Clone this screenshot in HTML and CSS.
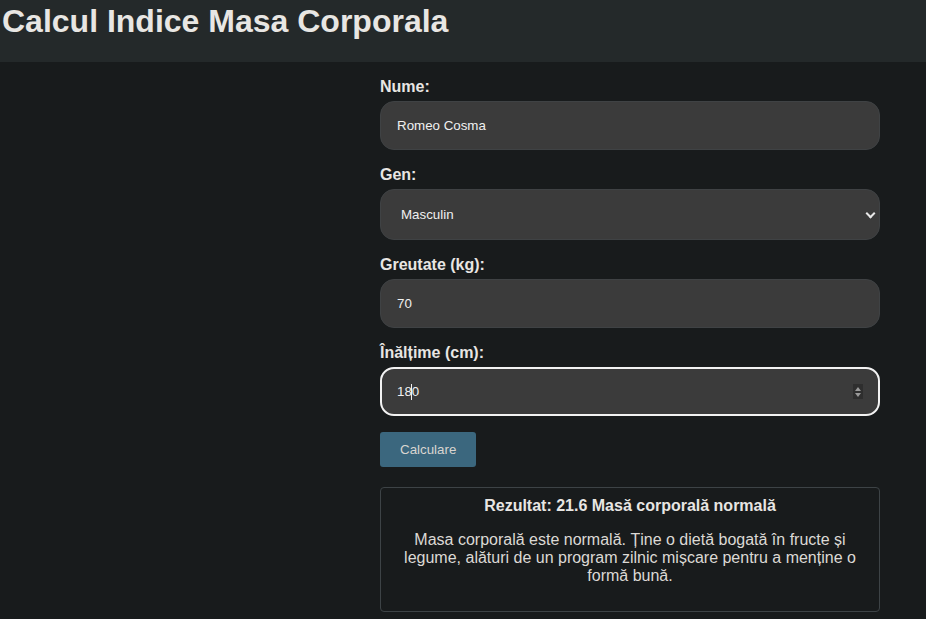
FILE: index.html
```html
<!DOCTYPE html>
<html lang="ro">
<head>
<meta charset="utf-8">
<title>Calcul Indice Masa Corporala</title>
<link rel="stylesheet" href="styles.css">
</head>
<body>
<header class="top-bar">
  <h1 class="title">Calcul Indice Masa Corporala</h1>
</header>
<main class="page">
  <form class="bmi-form">
    <div class="field">
      <label class="field-label" for="nume">Nume:</label>
      <input class="field-input" id="nume" type="text" value="Romeo Cosma">
    </div>
    <div class="field">
      <label class="field-label" for="gen">Gen:</label>
      <div class="select-wrap">
        <select class="field-input field-select" id="gen">
          <option>Masculin</option>
          <option>Feminin</option>
        </select>
      </div>
    </div>
    <div class="field">
      <label class="field-label" for="greutate">Greutate (kg):</label>
      <input class="field-input" id="greutate" type="text" value="70">
    </div>
    <div class="field">
      <label class="field-label" for="inaltime">Înălțime (cm):</label>
      <div class="number-wrap">
        <input class="field-input field-active" id="inaltime" type="text" value="180">
        <span class="caret"></span>
        <span class="spinner">
          <svg width="8" height="14" viewBox="0 0 8 14"><path d="M4 2 L7 6 H1 Z" fill="#9a9a9a"/><path d="M4 12 L7 8 H1 Z" fill="#9a9a9a"/></svg>
        </span>
      </div>
    </div>
    <button class="btn" type="button">Calculare</button>
    <section class="result">
      <h3 class="result-title">Rezultat: 21.6 Masă corporală normală</h3>
      <p class="result-text">Masa corporală este normală. Ține o dietă bogată în fructe și legume, alături de un program zilnic mișcare pentru a menține o formă bună.</p>
    </section>
  </form>
</main>
</body>
</html>
```

FILE: styles.css
```css
html, body {
  margin: 0;
  padding: 0;
}
body {
  background: #181b1c;
  color: #e8e6e3;
  font-family: "Liberation Sans", Arial, sans-serif;
  font-size: 16px;
}
.top-bar {
  background: #24292a;
  height: 62px;
  box-sizing: border-box;
  padding: 3px 2px 0;
}
.title {
  margin: 0;
  font-size: 32px;
  font-weight: bold;
  color: #e8e6e3;
}
.page {
  padding: 15px 0 20px 380px;
}
.bmi-form {
  width: 500px;
  display: flex;
  flex-direction: column;
}
.field {
  display: flex;
  flex-direction: column;
  margin-bottom: 15px;
}
.field-label {
  font-weight: bold;
  font-size: 16px;
  line-height: 20px;
  margin-bottom: 4px;
}
.field-input {
  box-sizing: border-box;
  width: 100%;
  height: 49px;
  padding: 0 16px;
  background: #3b3b3b;
  border: 1px solid #3f4244;
  border-radius: 14px;
  color: #f0f0f0;
  font-family: "Liberation Sans", Arial, sans-serif;
  font-size: 13.33px;
  outline: none;
}
.select-wrap {
  position: relative;
}
.field-select {
  appearance: none;
  -webkit-appearance: none;
  height: 51px;
  padding-left: 20px;
}
.select-wrap::after {
  content: "";
  position: absolute;
  right: 6px;
  top: 21px;
  width: 5px;
  height: 5px;
  border-right: 2px solid #e8e8e8;
  border-bottom: 2px solid #e8e8e8;
  transform: rotate(45deg);
}
.number-wrap {
  position: relative;
}
.field-active {
  border: 2px solid #f2f2f2;
  padding-left: 15px;
}
.caret {
  position: absolute;
  left: 31px;
  top: 17px;
  width: 1px;
  height: 16px;
  background: #f0f0f0;
}
.spinner {
  position: absolute;
  right: 17px;
  top: 17px;
  width: 10px;
  height: 15px;
  background: #2e2e2e;
  display: flex;
  align-items: center;
  justify-content: center;
}
.spinner svg {
  display: block;
}
.btn {
  align-self: flex-start;
  margin-top: 1px;
  padding: 10px 20px;
  border: none;
  border-radius: 3px;
  background: #3b677e;
  color: #d9d5d0;
  font-family: "Liberation Sans", Arial, sans-serif;
  font-size: 13.33px;
  line-height: 15px;
}
.result {
  margin-top: 20px;
  border: 1px solid #3d4346;
  border-radius: 4px;
  padding: 9px 20px 10px;
  text-align: center;
}
.result-title {
  margin: 0;
  font-size: 16px;
  font-weight: bold;
}
.result-text {
  margin: 16px 0;
  font-size: 16px;
  color: #dcd9d5;
}
```
